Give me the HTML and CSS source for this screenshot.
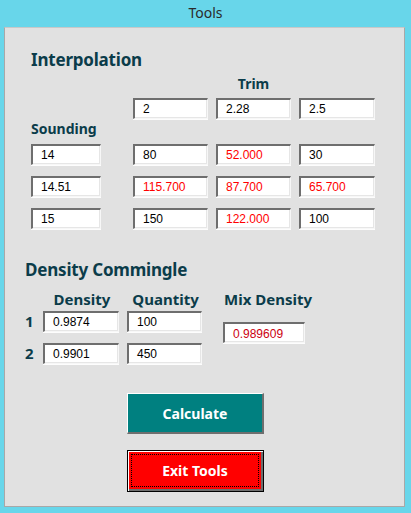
FILE: index.html
```html
<!DOCTYPE html>
<html>
<head>
<meta charset="utf-8">
<title>Tools</title>
<link rel="stylesheet" href="styles.css">
</head>
<body>
<div class="window">
  <div class="titlebar">Tools</div>
  <div class="client">
    <section class="interp">
      <h1 class="heading">Interpolation</h1>
      <div class="row head-row">
        <div class="c1"></div>
        <div class="cell"></div>
        <div class="cell label center">Trim</div>
        <div class="cell wide"></div>
      </div>
      <div class="row">
        <div class="c1"></div>
        <div class="box cell">2</div>
        <div class="box cell">2.28</div>
        <div class="box cell wide">2.5</div>
      </div>
      <div class="label sounding">Sounding</div>
      <div class="row">
        <div class="box c1">14</div>
        <div class="box cell">80</div>
        <div class="box cell red">52.000</div>
        <div class="box cell wide">30</div>
      </div>
      <div class="row gap">
        <div class="box c1">14.51</div>
        <div class="box cell red">115.700</div>
        <div class="box cell red">87.700</div>
        <div class="box cell red wide">65.700</div>
      </div>
      <div class="row gap">
        <div class="box c1">15</div>
        <div class="box cell">150</div>
        <div class="box cell red">122.000</div>
        <div class="box cell wide">100</div>
      </div>
    </section>

    <section class="density">
      <h1 class="heading">Density Commingle</h1>
      <div class="dgrid">
        <div class="label sub center dh1">Density</div>
        <div class="label sub center dh2">Quantity</div>
        <div class="label sub dh3">Mix Density</div>
        <div class="label num n1">1</div>
        <div class="box d1">0.9874</div>
        <div class="box q1">100</div>
        <div class="box mix">0.989609</div>
        <div class="label num n2">2</div>
        <div class="box d2">0.9901</div>
        <div class="box q2">450</div>
      </div>
    </section>

    <div class="buttons">
      <div class="btn calc">Calculate</div>
      <div class="btn exit"><span class="focus">Exit Tools</span></div>
    </div>
  </div>
</div>
</body>
</html>
```

FILE: styles.css
```css
html, body {
  margin: 0;
  padding: 0;
}
body {
  background: #68d6ea;
  width: 411px;
  height: 513px;
  overflow: hidden;
}
.window {
  display: flex;
  flex-direction: column;
}
.titlebar {
  height: 27px;
  line-height: 26px;
  text-align: center;
  font-family: "Noto Sans", sans-serif;
  font-size: 14px;
  color: #2a2a2a;
}
.client {
  margin-left: 4px;
  width: 399px;
  height: 478px;
  background: #e1e1e1;
  border: 1px solid #a8a8a8;
  border-top-color: #c8c8c8;
}
.heading {
  margin: 0;
  font-family: "Noto Sans", sans-serif;
  font-weight: bold;
  font-size: 17px;
  line-height: 24px;
  color: #0b3c4a;
  letter-spacing: -0.2px;
}
.label {
  font-family: "Noto Sans", sans-serif;
  font-weight: bold;
  font-size: 14px;
  line-height: 20px;
  color: #0b3c4a;
}
.label.sub { font-size: 15px; }
.center { text-align: center; }

.box {
  box-sizing: border-box;
  height: 21px;
  background: #fff;
  border-style: solid;
  border-width: 2px 1px 1px 2px;
  border-color: #6e6e6e #f7f7f7 #f7f7f7 #6e6e6e;
  box-shadow: inset -1px -1px 0 #e6e6e6, 0 1px 0 #fdfdfd;
  font-family: "Liberation Sans", Arial, sans-serif;
  font-size: 12px;
  line-height: 18px;
  padding-left: 8px;
  color: #000;
}
.red { color: #ff0000; }

.interp {
  padding-left: 26px;
  padding-top: 20px;
}
.row {
  display: flex;
  gap: 8px;
}
.c1 { width: 70px; margin-right: 24px; box-sizing: border-box; }
.cell { width: 75px; }
.wide { width: 76px; }
.head-row { margin-top: 2px; }
.head-row + .row { margin-top: 4px; }
.sounding { margin-top: 0; }
.sounding + .row { margin-top: 5px; }
.row.gap { margin-top: 11px; }

.density {
  padding-left: 20px;
  margin-top: 29px;
}
.dgrid {
  display: grid;
  grid-template-columns: 18px 76px 8px 75px 21px 90px;
  grid-template-rows: 20px 21px 21px;
  row-gap: 0;
  margin-top: 7px;
}
.dgrid .box { height: 21px; }
.dh1 { grid-column: 2; grid-row: 1; margin-left: 2px; }
.dh2 { grid-column: 4; grid-row: 1; margin-left: 2px; }
.dh3 { grid-column: 6; grid-row: 1; margin-left: 1px; white-space: nowrap; }
.num { line-height: 21px; font-size: 15px; padding-left: 0; }
.n1 { grid-column: 1; grid-row: 2; margin-top: 2px; }
.d1 { grid-column: 2; grid-row: 2; margin-top: 2px; }
.q1 { grid-column: 4; grid-row: 2; margin-top: 2px; }
.n2 { grid-column: 1; grid-row: 3; margin-top: 13px; }
.d2 { grid-column: 2; grid-row: 3; margin-top: 13px; }
.q2 { grid-column: 4; grid-row: 3; margin-top: 13px; }
.mix {
  grid-column: 6;
  grid-row: 2 / 4;
  width: 82px;
  height: 25px;
  margin-top: 13px;
  line-height: 21px;
  color: #cc0010;
}

.buttons {
  display: flex;
  flex-direction: column;
  gap: 16px;
  margin-left: 122px;
  margin-top: 42px;
}
.btn {
  box-sizing: border-box;
  width: 137px;
  display: flex;
  align-items: center;
  justify-content: center;
  font-family: "Noto Sans", sans-serif;
  font-weight: bold;
  font-size: 14px;
  color: #fff;
}
.calc {
  height: 41px;
  background: #008080;
  border-style: solid;
  border-width: 1px 2px 2px 1px;
  border-color: #ffffff #6e6e6e #6e6e6e #ffffff;
}
.exit {
  height: 42px;
  background: #ff0000;
  border: 1px solid #000;
  box-shadow: inset 1px 1px 0 #fff, inset -2px -2px 0 #6e6e6e;
  padding: 3px 4px 4px 3px;
}
.focus {
  flex: 1;
  align-self: stretch;
  display: flex;
  align-items: center;
  justify-content: center;
  border: 1px dotted #000;
}
```
